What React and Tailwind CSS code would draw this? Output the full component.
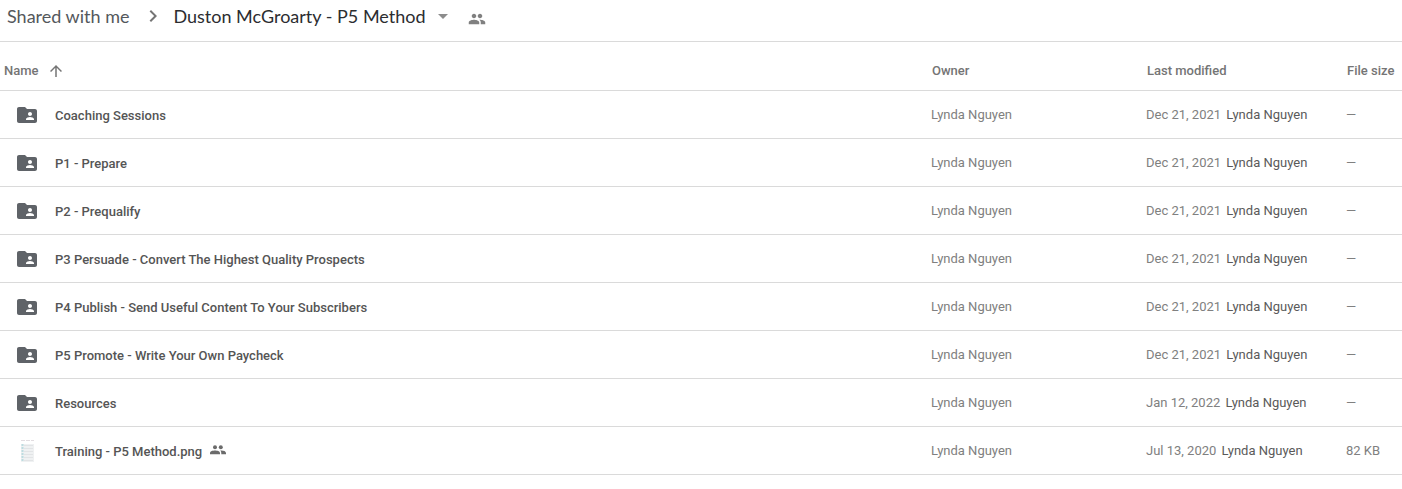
const PEOPLE =
  "M16 11c1.66 0 2.99-1.34 2.99-3S17.66 5 16 5c-1.66 0-3 1.34-3 3s1.34 3 3 3zm-8 0c1.66 0 2.99-1.34 2.99-3S9.66 5 8 5C6.34 5 5 6.34 5 8s1.34 3 3 3zm0 2c-2.33 0-7 1.17-7 3.5V19h14v-2.5c0-2.33-4.67-3.5-7-3.5zm8 0c-.29 0-.62.02-.97.05 1.16.84 1.97 1.97 1.97 3.45V19h6v-2.5c0-2.33-4.67-3.5-7-3.5z";

const FOLDER =
  "M20 6h-8l-2-2H4c-1.1 0-1.99.9-1.99 2L2 18c0 1.1.9 2 2 2h16c1.1 0 2-.9 2-2V8c0-1.1-.9-2-2-2zm-5 3c1.1 0 2 .9 2 2s-.9 2-2 2-2-.9-2-2 .9-2 2-2zm4 8h-8v-1c0-1.33 2.67-2 4-2s4 .67 4 2v1z";

function Icon({ path, className }) {
  return (
    <svg viewBox="0 0 24 24" fill="currentColor" aria-hidden="true" className={className}>
      <path d={path} />
    </svg>
  );
}

function SharedBadge() {
  return (
    <svg viewBox="0 0 16 10" fill="currentColor" aria-hidden="true" className="mb-0.5 ml-2 h-2.5 w-4 text-[#6b6b6b]">
      <circle cx="5" cy="2.2" r="2" />
      <circle cx="10.8" cy="2.2" r="2" />
      <path d="M0 9.3V8c0-1.800 2.600-2.500 5-2.500s5 .7 5 2.500v1.300zM11.300 9.300V8c0-1-.4-1.700-1.100-2.400 2.700-.3 5.800.5 5.800 2.400v1.300z" />
    </svg>
  );
}

function SheetThumb() {
  return (
    <svg viewBox="0 0 24 24" aria-hidden="true" className="size-6">
      <path d="M6 1.5h13" stroke="#e2dde1" strokeWidth="1" strokeDasharray="4 1" />
      <path d="M6 5h13v18H6z" fill="#eff1f2" />
      <path d="M9 6.5h9M9 9.5h9M9 12.5h9M9 15.5h9M9 18.5h9M9 21.5h9" stroke="#e2e4e6" strokeWidth="1" />
      <path d="M7.5 5v18" stroke="#bddce0" strokeWidth="2" strokeDasharray="2 1" />
    </svg>
  );
}

const files = [
  { name: "Coaching Sessions", date: "Dec 21, 2021" },
  { name: "P1 - Prepare", date: "Dec 21, 2021" },
  { name: "P2 - Prequalify", date: "Dec 21, 2021" },
  { name: "P3 Persuade - Convert The Highest Quality Prospects", date: "Dec 21, 2021" },
  { name: "P4 Publish - Send Useful Content To Your Subscribers", date: "Dec 21, 2021" },
  { name: "P5 Promote - Write Your Own Paycheck", date: "Dec 21, 2021" },
  { name: "Resources", date: "Jan 12, 2022" },
  { name: "Training - P5 Method.png", date: "Jul 13, 2020", size: "82 KB", image: true },
];

function FileRow({ file }) {
  return (
    <tr className="h-12 border-b border-[#dadada]">
      <td className="pt-0.5 pl-[15px]">
        <div className="flex items-center">
          {file.image ? <SheetThumb /> : <Icon path={FOLDER} className="size-6 text-[#5f6368]" />}
          <a href="#" className="ml-4 pt-0.5 font-medium text-[#555555]">{file.name}</a>
          {file.image && <SharedBadge />}
        </div>
      </td>
      <td className="pt-0.5 text-[#808080]">Lynda Nguyen</td>
      <td className="pt-0.5 text-[#808080]">
        {file.date} <span className="ml-0.5 text-[#5a5a5a]">Lynda Nguyen</span>
      </td>
      <td className="pt-0.5 text-[#808080]">{file.size ?? "—"}</td>
    </tr>
  );
}

export default function App() {
  return (
    <main className="min-h-screen bg-white font-['Roboto',sans-serif] text-[13px] leading-5">
      <nav
        aria-label="Breadcrumb"
        className="flex items-center border-b border-[#dadada] pt-0.5 pb-[11px] pl-[7px] font-['Lato',sans-serif] text-lg text-[#2c2d30]"
      >
        <a href="#" className="text-[#54585c]">Shared with me</a>
        <svg viewBox="0 0 24 24" fill="currentColor" aria-hidden="true" className="mr-2 ml-3 size-6 text-[#757575]">
          <path d="M8.59 16.59 13.17 12 8.59 7.41 10 6l6 6-6 6z" />
        </svg>
        <button type="button" className="flex items-center">
          Duston McGroarty - P5 Method
          <svg viewBox="0 0 10 5" fill="#8c8c8c" aria-hidden="true" className="ml-3 h-[5px] w-[10px]">
            <path d="M0 0h10L5 5z" />
          </svg>
        </button>
        <button type="button" aria-label="Shared" className="ml-5 pt-1.5">
          <Icon path={PEOPLE} className="size-[18px] text-[#808080]" />
        </button>
      </nav>
      <table className="w-full table-fixed border-collapse text-left">
        <thead>
          <tr className="h-12 border-b border-[#dadada] text-[#757575]">
            <th className="pt-2.5 pl-1 font-medium">
              <button type="button" className="flex items-center gap-2">
                Name
                <svg viewBox="0 0 24 24" fill="currentColor" aria-hidden="true" className="size-[18px]">
                  <path d="m4 12 1.41 1.41L11 7.83V20h2V7.83l5.58 5.59L20 12l-8-8-8 8z" />
                </svg>
              </button>
            </th>
            <th className="w-[215px] pt-2.5 pl-px font-medium">Owner</th>
            <th className="w-[200px] pt-2.5 pl-px font-medium">Last modified</th>
            <th className="w-[56px] pt-2.5 pl-px font-medium">File size</th>
          </tr>
        </thead>
        <tbody>
          {files.map((file) => (
            <FileRow key={file.name} file={file} />
          ))}
        </tbody>
      </table>
    </main>
  );
}
